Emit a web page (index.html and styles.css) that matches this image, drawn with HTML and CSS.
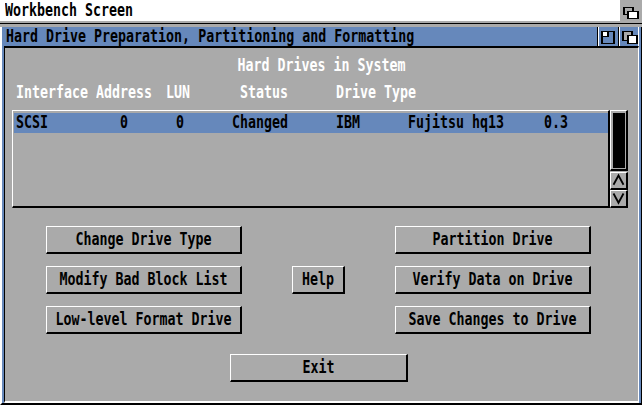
FILE: index.html
```
<!DOCTYPE html>
<html>
<head>
<meta charset="utf-8">
<title>HDToolBox</title>
<link rel="stylesheet" href="styles.css">
</head>
<body>
<div class="screenbar">
  <span class="tx">Workbench Screen</span>
  <div class="sdepth">
    <svg width="22" height="21" viewBox="0 0 22 21" shape-rendering="crispEdges">
      <rect x="3" y="7" width="11" height="8" fill="#000"/>
      <rect x="5" y="8" width="7" height="6" fill="#aaaaaa"/>
      <rect x="7" y="11" width="12" height="8" fill="#000"/>
      <rect x="9" y="12" width="8" height="6" fill="#fff"/>
    </svg>
  </div>
</div>
<div class="screenrule"></div>
<div class="window">
  <div class="titlebar">
    <span class="tx">Hard Drive Preparation, Partitioning and Formatting</span>
    <div class="gad zoom">
      <svg width="20" height="19" viewBox="0 0 20 19" shape-rendering="crispEdges">
        <rect x="3" y="4" width="14" height="13" fill="#000"/>
        <rect x="5" y="5" width="10" height="11" fill="#6688bb"/>
        <rect x="5" y="5" width="4" height="4" fill="#fff"/>
        <rect x="9" y="5" width="2" height="5" fill="#000"/>
        <rect x="5" y="9" width="6" height="1" fill="#000"/>
      </svg>
    </div>
    <div class="gad depth">
      <svg width="19" height="19" viewBox="0 0 19 19" shape-rendering="crispEdges">
        <rect x="3" y="4" width="11" height="10" fill="#000"/>
        <rect x="5" y="5" width="7" height="8" fill="#aaaaaa"/>
        <rect x="8" y="8" width="11" height="9" fill="#000"/>
        <rect x="10" y="9" width="7" height="7" fill="#fff"/>
      </svg>
    </div>
  </div>
  <div class="interior">
    <div class="heading"><span class="tx">Hard Drives in System</span></div>
    <div class="colhead">
      <span class="tx w80">Interface</span>
      <span class="tx w70">Address</span>
      <span class="tx w74">LUN</span>
      <span class="tx w96">Status</span>
      <span class="tx">Drive Type</span>
    </div>
    <div class="listgroup">
      <div class="listbox">
        <div class="row sel">
          <span class="tx w104">SCSI</span>
          <span class="tx w56">0</span>
          <span class="tx w56">0</span>
          <span class="tx w104">Changed</span>
          <span class="tx w72">IBM</span>
          <span class="tx w136">Fujitsu hq13</span>
          <span class="tx">0.3</span>
        </div>
      </div>
      <div class="scroller">
        <div class="prop"><div class="knob"></div></div>
        <div class="arrow up">
          <svg width="15" height="15" viewBox="0 0 15 15"><polyline points="2.5,11.8 7.5,2.5 12.5,11.8" fill="none" stroke="#000" stroke-width="1.8"/></svg>
        </div>
        <div class="arrow">
          <svg width="15" height="15" viewBox="0 0 15 15"><polyline points="2.5,2.5 7.5,11.8 12.5,2.5" fill="none" stroke="#000" stroke-width="1.8"/></svg>
        </div>
      </div>
    </div>
    <div class="buttons">
      <div class="btn c1 r1"><span class="tx">Change Drive Type</span></div>
      <div class="btn c1 r2"><span class="tx">Modify Bad Block List</span></div>
      <div class="btn c1 r3"><span class="tx">Low-level Format Drive</span></div>
      <div class="btn c2 r2"><span class="tx">Help</span></div>
      <div class="btn c3 r1"><span class="tx">Partition Drive</span></div>
      <div class="btn c3 r2"><span class="tx">Verify Data on Drive</span></div>
      <div class="btn c3 r3"><span class="tx">Save Changes to Drive</span></div>
    </div>
    <div class="btn exit"><span class="tx">Exit</span></div>
  </div>
</div>
</body>
</html>
```
FILE: styles.css
```
* { box-sizing: border-box; }
html, body { margin: 0; padding: 0; }
body {
  width: 642px;
  height: 405px;
  overflow: hidden;
  background: #aaaaaa;
  font-family: "DejaVu Sans Mono", monospace;
  font-size: 13.3px;
  font-weight: bold;
  line-height: 16px;
  color: #000;
}
svg { display: block; }
.tx {
  display: inline-block;
  white-space: pre;
  transform: scaleY(1.35);
}

/* screen title bar */
.screenbar {
  height: 21px;
  background: #fff;
  display: flex;
  align-items: center;
  padding-left: 5px;
}
.sdepth {
  margin-left: auto;
  align-self: stretch;
  width: 22px;
  background: #aaaaaa;
}
.screenrule {
  height: 1px;
  background: #000;
  margin: 2px 0 3px;
}

/* window frame */
.window {
  height: 378px;
  background: #6688bb;
  border-left: 2px solid #fff;
  border-right: 1px solid #000;
  border-bottom: 2px solid #000;
  padding: 0 2px;
  display: flex;
  flex-direction: column;
}
.titlebar {
  height: 19px;
  flex: none;
  display: flex;
  align-items: center;
  padding-left: 2px;
  border-right: 1px solid #fff;
}
.gad {
  align-self: stretch;
  border-left: 1px solid #000;
  box-shadow: inset 1px 0 #fff;
}
.gad.zoom { margin-left: auto; width: 21px; }
.gad.depth { width: 20px; }

.interior {
  flex: 1;
  background: #aaaaaa;
  border-top: 2px solid #000;
  border-left: 1px solid #000;
  border-right: 1px solid #fff;
  border-bottom: 2px solid #fff;
  display: flex;
  flex-direction: column;
  align-items: flex-start;
}
.heading {
  align-self: stretch;
  height: 18px;
  margin-top: 9px;
  display: flex;
  justify-content: center;
  align-items: center;
  color: #fff;
}
.colhead {
  height: 18px;
  margin-top: 9px;
  padding-left: 11px;
  display: flex;
  align-items: center;
  color: #fff;
}
.w56 { width: 56px; }
.w70 { width: 70px; }
.w72 { width: 72px; }
.w74 { width: 74px; }
.w80 { width: 80px; }
.w96 { width: 96px; }
.w104 { width: 104px; }
.w136 { width: 136px; }

/* list view */
.listgroup {
  display: flex;
  height: 98px;
  margin-top: 8px;
  margin-left: 7px;
}
.listbox {
  width: 598px;
  border-top: 1px solid #fff;
  border-left: 1px solid #fff;
  border-right: 2px solid #000;
  border-bottom: 2px solid #000;
  padding: 2px 0 0 1px;
}
.row {
  height: 20px;
  display: flex;
  align-items: center;
  padding-left: 2px;
}
.row.sel { background: #6688bb; }

.scroller {
  width: 18px;
  display: flex;
  flex-direction: column;
}
.prop {
  height: 61px;
  border-top: 1px solid #fff;
  border-left: 1px solid #fff;
  border-right: 2px solid #000;
  border-bottom: 2px solid #000;
  padding: 2px 1px 1px 2px;
}
.knob { height: 100%; background: #000; }
.arrow {
  height: 18px;
  border-top: 1px solid #fff;
  border-left: 1px solid #fff;
  border-right: 2px solid #000;
  border-bottom: 2px solid #000;
}
.arrow.up { margin-top: 1px; }

/* buttons */
.buttons {
  display: grid;
  grid-template-columns: 196px 53px 196px;
  grid-template-rows: 28px 28px 28px;
  column-gap: 50px;
  row-gap: 12px;
  margin-top: 18px;
  margin-left: 41px;
}
.btn {
  display: flex;
  align-items: center;
  justify-content: center;
  background: #aaaaaa;
  border-top: 1px solid #fff;
  border-left: 1px solid #fff;
  border-right: 2px solid #000;
  border-bottom: 2px solid #000;
}
.c1 { grid-column: 1; }
.c2 { grid-column: 2; }
.c3 { grid-column: 3; }
.r1 { grid-row: 1; }
.r2 { grid-row: 2; }
.r3 { grid-row: 3; }
.exit {
  width: 178px;
  height: 28px;
  margin-top: 20px;
  margin-left: 225px;
}
```
